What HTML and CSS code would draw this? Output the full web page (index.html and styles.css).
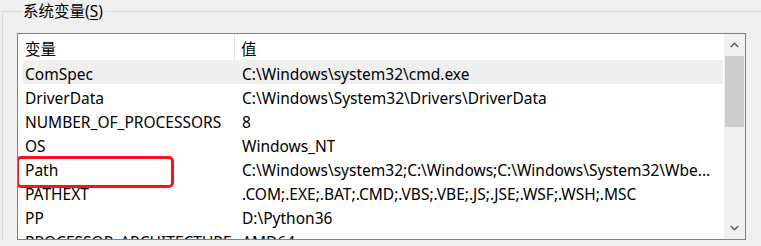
FILE: index.html
```html
<!DOCTYPE html>
<html lang="zh-CN">
<head>
<meta charset="UTF-8">
<title>系统变量</title>
<link rel="stylesheet" href="styles.css">
</head>
<body>
<fieldset class="group">
<legend class="groupTitle">系统变量(<u>S</u>)</legend>
<div class="listBox">
<div class="listArea">
<div class="listHead">
<div class="headName">变量</div>
<div class="headValue">值</div>
</div>
<div class="row selected"><span class="name">ComSpec</span><span class="value">C:\Windows\system32\cmd.exe</span></div>
<div class="row"><span class="name">DriverData</span><span class="value">C:\Windows\System32\Drivers\DriverData</span></div>
<div class="row"><span class="name">NUMBER_OF_PROCESSORS</span><span class="value">8</span></div>
<div class="row"><span class="name">OS</span><span class="value">Windows_NT</span></div>
<div class="row marked"><span class="name">Path</span><span class="value">C:\Windows\system32;C:\Windows;C:\Windows\System32\Wbe...</span></div>
<div class="row"><span class="name">PATHEXT</span><span class="value">.COM;.EXE;.BAT;.CMD;.VBS;.VBE;.JS;.JSE;.WSF;.WSH;.MSC</span></div>
<div class="row"><span class="name">PP</span><span class="value">D:\Python36</span></div>
<div class="row"><span class="name">PROCESSOR_ARCHITECTURE</span><span class="value">AMD64</span></div>
</div>
<div class="scrollBar">
<div class="arrow">
<svg width="9" height="6" viewBox="0 0 9 6"><polyline points="0.8,5 4.5,1.3 8.2,5" fill="none" stroke="#606060" stroke-width="1.6"/></svg>
</div>
<div class="thumb"></div>
<div class="track"></div>
<div class="arrow">
<svg width="9" height="6" viewBox="0 0 9 6"><polyline points="0.8,1 4.5,4.7 8.2,1" fill="none" stroke="#606060" stroke-width="1.6"/></svg>
</div>
</div>
</div>
</fieldset>
</body>
</html>
```

FILE: styles.css
```css
* {
margin: 0;
padding: 0;
box-sizing: border-box;
}
body {
background-color: #f0f0f0;
font-family: "Noto Sans", "Noto Sans CJK SC", sans-serif;
font-size: 15.5px;
color: #000;
height: 246px;
overflow: hidden;
}
.group {
margin: 1px 0 0 2px;
border: 0;
border-top: 1px solid #dcdcdc;
border-left: 1px solid #dcdcdc;
padding: 12px 15px 0 14px;
}
.groupTitle {
margin-left: 5px;
padding: 0 2px 0 1px;
line-height: 20px;
}
.groupTitle u {
text-decoration-thickness: 1px;
text-underline-offset: 2px;
}
.listBox {
display: flex;
height: 207px;
background-color: #fff;
border: 1px solid #828282;
overflow: hidden;
}
.listArea {
flex: 1;
padding-left: 5px;
padding-right: 1px;
overflow: hidden;
}
.listHead {
display: flex;
height: 26px;
}
.headName {
width: 212px;
height: 26px;
padding: 4px 0 0 2px;
line-height: 22px;
border-right: 1px solid #e5e5e5;
}
.headValue {
padding: 4px 0 0 6px;
line-height: 22px;
}
.row {
display: flex;
height: 24px;
padding-top: 4px;
line-height: 20px;
white-space: nowrap;
}
.row.selected {
background-color: #efefef;
}
.name {
width: 217px;
padding-left: 2px;
flex-shrink: 0;
}
.value {
padding-left: 2px;
overflow: hidden;
text-overflow: ellipsis;
}
.marked {
position: relative;
}
.marked::after {
content: "";
position: absolute;
left: -7px;
top: 0;
width: 152px;
height: 26px;
border: 3px solid #f0161a;
border-radius: 5px;
}
.scrollBar {
width: 21px;
display: flex;
flex-direction: column;
background-color: #f0f0f0;
}
.arrow {
height: 22px;
display: flex;
align-items: center;
justify-content: center;
}
.thumb {
height: 71px;
margin: 0 1px;
background-color: #cdcdcd;
}
.track {
flex: 1;
}
```
